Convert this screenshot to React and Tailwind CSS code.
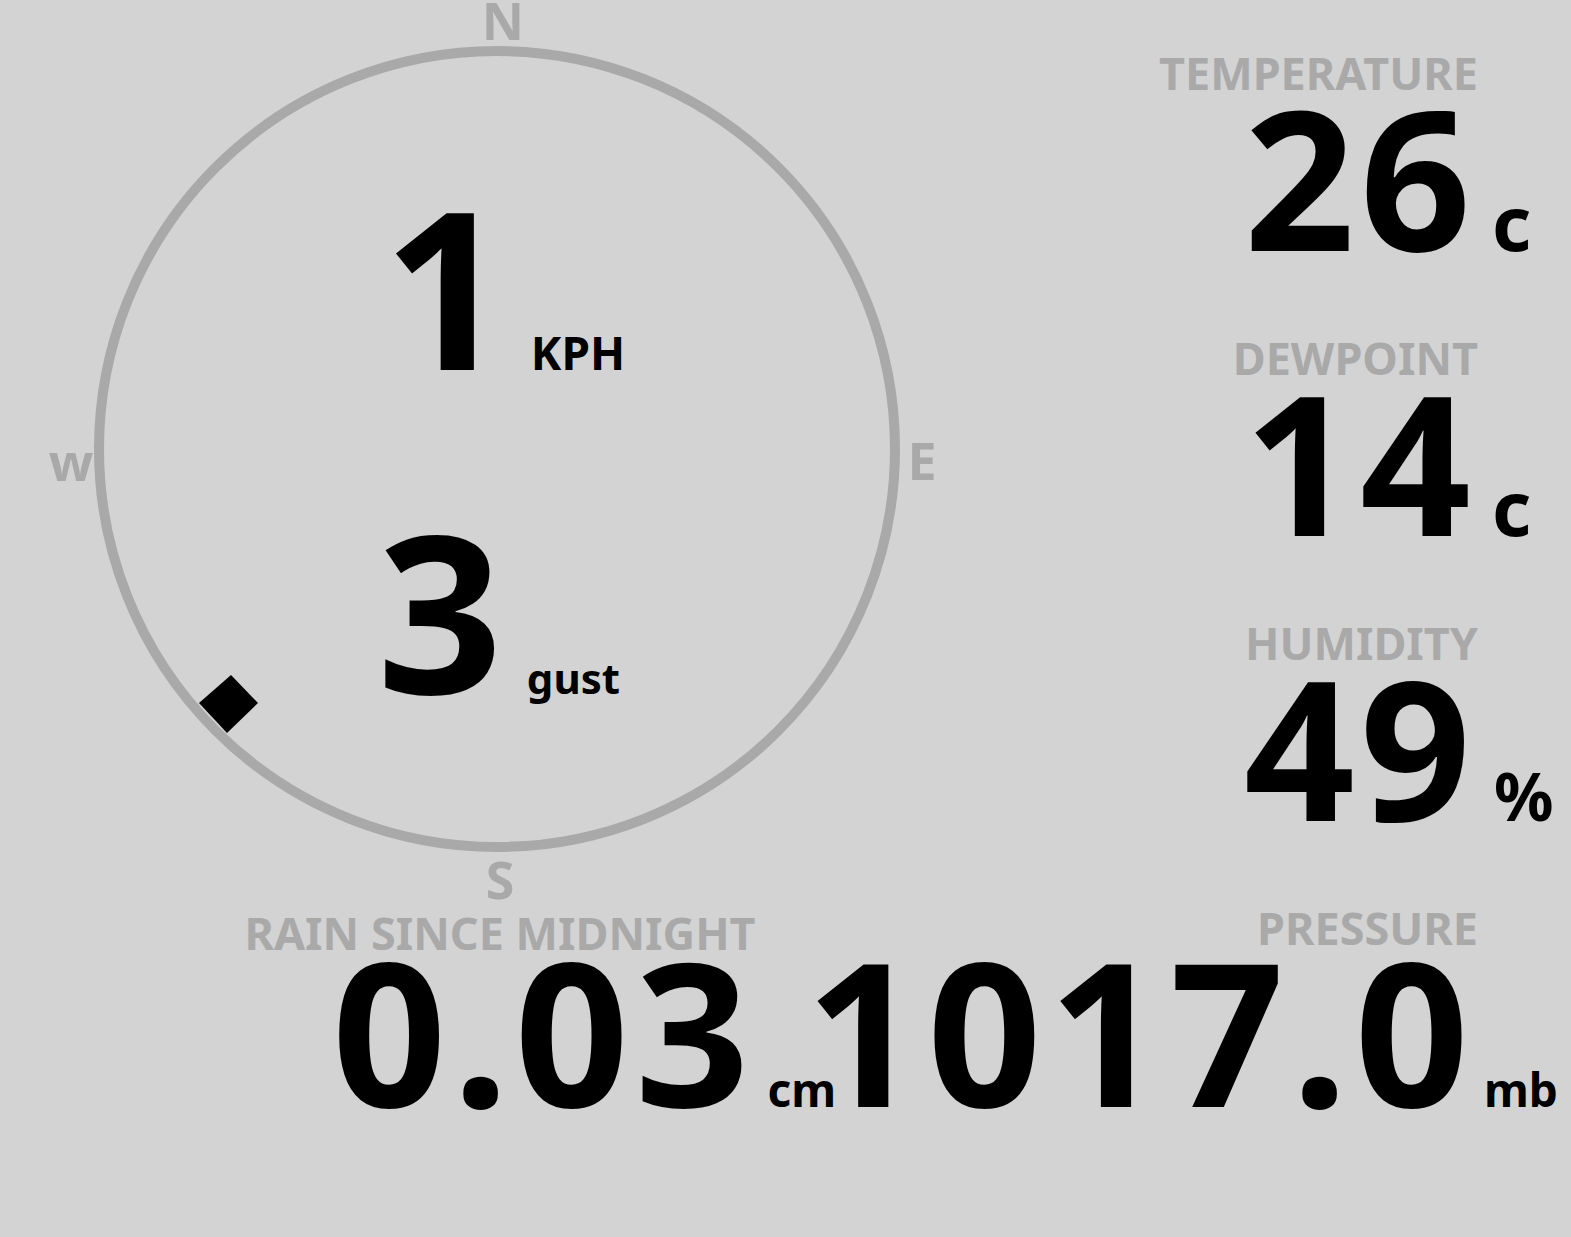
import React from "react";

function Stat({ label, value, unit, unitClass }) {
  return (
    <div className="flex flex-col items-end">
      <div className="mr-[93px] whitespace-nowrap text-[45px] leading-[45px] text-[#a9a9a9]">{label}</div>
      <div className="mt-[4px] flex items-baseline whitespace-nowrap">
        <span className="text-[194px] leading-[155px] tracking-[5px] text-black">{value}</span>
        <span className={"w-[95px] leading-[50px] text-black " + unitClass}>{unit}</span>
      </div>
    </div>
  );
}

export default function App() {
  return (
    <div className="relative h-[1237px] w-[1571px] overflow-hidden bg-[#d3d3d3] font-['Noto_Sans',sans-serif] font-bold">
      <div className="flex h-[905px]">
        <div className="relative w-[1000px] shrink-0">
          <svg className="absolute left-0 top-0" width="1000" height="905" viewBox="0 0 1000 905">
            <circle cx="497" cy="449" r="398" fill="none" stroke="#a9a9a9" strokeWidth="10" />
            <polygon points="231,675 258,703 227,733 199,703" fill="#000" />
          </svg>
          <span className="absolute left-[503px] top-[-6px] -translate-x-1/2 text-[52px] leading-[52px] text-[#a9a9a9]">N</span>
          <span className="absolute left-[71px] top-[435px] -translate-x-1/2 text-[52px] leading-[52px] text-[#a9a9a9]">w</span>
          <span className="absolute left-[922px] top-[434px] -translate-x-1/2 text-[52px] leading-[52px] text-[#a9a9a9]">E</span>
          <span className="absolute left-[500px] top-[853px] -translate-x-1/2 text-[52px] leading-[52px] text-[#a9a9a9]">S</span>
          <div className="relative flex flex-col pt-[200px]">
            <div className="flex items-baseline pl-[383px] whitespace-nowrap">
              <span className="text-[220px] leading-[170px] text-black">1</span>
              <span className="ml-[22px] text-[46px] leading-[46px] text-black">KPH</span>
            </div>
            <div className="mt-[149px] flex items-baseline pl-[377px] whitespace-nowrap">
              <span className="text-[220px] leading-[170px] text-black">3</span>
              <span className="ml-[24px] text-[42px] leading-[46px] text-black">gust</span>
            </div>
          </div>
        </div>
        <div className="flex min-w-0 flex-1 flex-col items-end gap-[81px] pt-[50px]">
          <Stat label="TEMPERATURE" value="26" unit="c" unitClass="pl-[16px] text-[76px]" />
          <Stat label="DEWPOINT" value="14" unit="c" unitClass="pl-[16px] text-[76px]" />
          <Stat label="HUMIDITY" value="49" unit="%" unitClass="pl-[18px] text-[66px]" />
        </div>
      </div>
      <div className="flex">
        <div className="flex w-[1000px] shrink-0 flex-col">
          <div className="whitespace-nowrap pt-[5px] text-center text-[45px] leading-[45px] text-[#a9a9a9]">RAIN SINCE MIDNIGHT</div>
          <div className="-mt-[5px] flex items-baseline whitespace-nowrap pl-[332px]">
            <span className="text-[200px] leading-[160px] tracking-[6px] text-black">0.03</span>
            <span className="ml-[12px] text-[46px] leading-[46px] text-black">cm</span>
          </div>
        </div>
        <div className="flex min-w-0 flex-1 flex-col items-end">
          <div className="mr-[93px] whitespace-nowrap text-[45px] leading-[45px] text-[#a9a9a9]">PRESSURE</div>
          <div className="flex items-baseline whitespace-nowrap">
            <span className="text-[200px] leading-[160px] tracking-[7px] text-black">1017.0</span>
            <span className="w-[95px] pl-[8px] text-[46px] leading-[46px] text-black">mb</span>
          </div>
        </div>
      </div>
    </div>
  );
}
